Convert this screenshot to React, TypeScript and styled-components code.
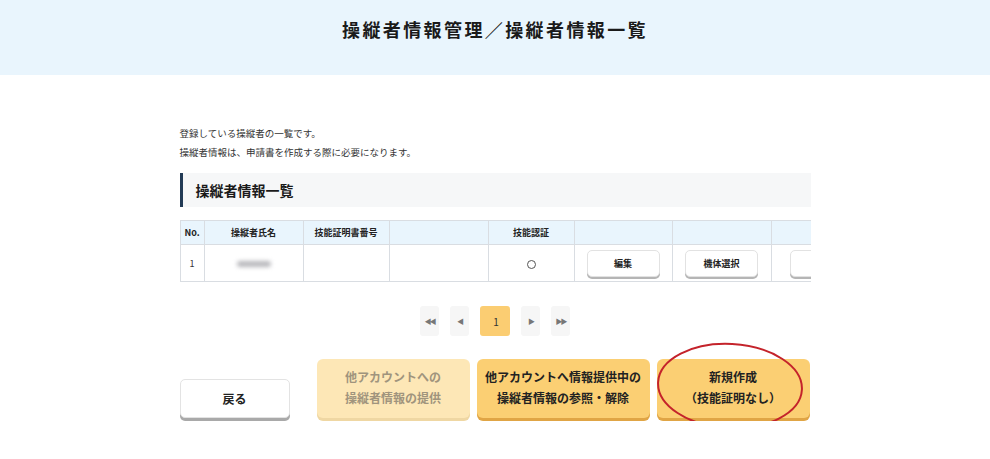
import React from "react";
import styled, { createGlobalStyle } from "styled-components";

const Global = createGlobalStyle`
  html, body { margin: 0; padding: 0; background: #fff; }
  body { font-family: "Noto Sans CJK JP", "Noto Sans", sans-serif; color: #222; }
  * { box-sizing: border-box; }
`;

const Header = styled.header`
  height: 75px;
  background: #e9f5fd;
  display: flex;
  justify-content: center;
  padding-top: 14px;
`;

const Title = styled.h1`
  margin: 0;
  font-size: 18px;
  font-weight: 700;
  letter-spacing: 2.4px;
  line-height: 30px;
  color: #1a1a1a;
`;

const Main = styled.main`
  width: 631px;
  margin: 0 auto;
  padding-top: 49px;
`;

const Intro = styled.p`
  margin: 0;
  font-size: 9.5px;
  line-height: 19px;
  color: #333;
`;

const SectionHead = styled.h2`
  margin: 11px 0 0;
  height: 34px;
  background: #f6f7f8;
  border-left: 3px solid #223a55;
  padding-left: 13px;
  display: flex;
  align-items: center;
  font-size: 14px;
  font-weight: 700;
  color: #1a1a1a;
`;

const TableWrap = styled.div`
  margin-top: 13px;
  overflow: hidden;
`;

const Table = styled.table`
  border-collapse: collapse;
  table-layout: fixed;
  width: 690px;
  font-size: 9px;
`;

const Th = styled.th<{ $w: number }>`
  width: ${(p) => p.$w}px;
  height: 24px;
  background: #e9f5fd;
  border: 1px solid #d9dde2;
  font-weight: 700;
  color: #222;
  padding: 0;
`;

const Td = styled.td<{ $align?: string }>`
  height: 37px;
  border: 1px solid #d9dde2;
  text-align: ${(p) => p.$align || "center"};
  padding: 0 0 0 ${(p) => (p.$align === "left" ? 18 : 0)}px;
  color: #333;
`;

const Circ = styled.span`
  display: inline-block;
  width: 9px;
  height: 9px;
  border: 1px solid #555;
  border-radius: 50%;
  vertical-align: middle;
`;

const Blur = styled.span`
  display: inline-block;
  width: 34px;
  height: 6px;
  border-radius: 4px;
  background: #b8b8bc;
  filter: blur(2px);
`;

const RowButton = styled.button`
  width: 73px;
  height: 27px;
  border: 1px solid #e2e2e2;
  border-radius: 5px;
  background: #fff;
  box-shadow: 0 2px 0 #b5b5b5;
  font-family: inherit;
  font-size: 9px;
  font-weight: 700;
  color: #222;
  padding: 0;
  vertical-align: middle;
`;

const Pager = styled.nav`
  margin-top: 24px;
  display: flex;
  justify-content: center;
  gap: 11px;
`;

const PageBtn = styled.span<{ $active?: boolean }>`
  width: ${(p) => (p.$active ? 30 : 19)}px;
  height: 30px;
  border-radius: 3px;
  background: ${(p) => (p.$active ? "#fbcd72" : "#f6f6f6")};
  display: flex;
  align-items: center;
  justify-content: center;
  font-size: ${(p) => (p.$active ? 10 : 7)}px;
  color: ${(p) => (p.$active ? "#333" : "#777")};
  letter-spacing: -2px;
`;

const Actions = styled.div`
  margin-top: 23px;
  display: flex;
  align-items: flex-end;
`;

const BackButton = styled.button`
  width: 110px;
  height: 39px;
  margin-right: 27px;
  margin-bottom: 3px;
  border: 1px solid #e3e3e3;
  border-radius: 5px;
  background: #fff;
  box-shadow: 0 3px 0 #a9a9a9;
  font-family: inherit;
  font-size: 12px;
  font-weight: 700;
  color: #222;
`;

const BigButton = styled.button<{ $w: number; $disabled?: boolean }>`
  position: relative;
  width: ${(p) => p.$w}px;
  height: 59px;
  margin: 0 7px 3px 0;
  border: none;
  border-radius: 6px;
  background: ${(p) => (p.$disabled ? "#fde7b6" : "#fbcf73")};
  box-shadow: 0 3px 0 ${(p) => (p.$disabled ? "#efd7a3" : "#e0a545")};
  font-family: inherit;
  font-size: 12px;
  font-weight: 700;
  line-height: 21px;
  color: ${(p) => (p.$disabled ? "#a0947d" : "#222")};
  padding: 0 0 4px;
  &:last-child { margin-right: 0; }
`;

const Circle = styled.svg`
  position: absolute;
  left: -2px;
  top: -17px;
  overflow: visible;
  pointer-events: none;
`;

const cols = [
  { w: 24, label: "No." },
  { w: 99, label: "操縦者氏名" },
  { w: 86, label: "技能証明書番号" },
  { w: 99, label: "" },
  { w: 86, label: "技能認証" },
  { w: 98, label: "" },
  { w: 99, label: "" },
  { w: 99, label: "" },
];

export default function App() {
  return (
    <>
      <Global />
      <Header>
        <Title>操縦者情報管理／操縦者情報一覧</Title>
      </Header>
      <Main>
        <Intro>登録している操縦者の一覧です。</Intro>
        <Intro>操縦者情報は、申請書を作成する際に必要になります。</Intro>
        <SectionHead>操縦者情報一覧</SectionHead>
        <TableWrap>
          <Table>
            <thead>
              <tr>
                {cols.map((c, i) => (
                  <Th key={i} $w={c.w}>
                    {c.label}
                  </Th>
                ))}
              </tr>
            </thead>
            <tbody>
              <tr>
                <Td>1</Td>
                <Td>
                  <Blur />
                </Td>
                <Td />
                <Td />
                <Td>
                  <Circ />
                </Td>
                <Td>
                  <RowButton>編集</RowButton>
                </Td>
                <Td>
                  <RowButton>機体選択</RowButton>
                </Td>
                <Td $align="left">
                  <RowButton aria-label="削除" />
                </Td>
              </tr>
            </tbody>
          </Table>
        </TableWrap>
        <Pager>
          <PageBtn>◀◀</PageBtn>
          <PageBtn>◀</PageBtn>
          <PageBtn $active>1</PageBtn>
          <PageBtn>▶</PageBtn>
          <PageBtn>▶▶</PageBtn>
        </Pager>
        <Actions>
          <BackButton>戻る</BackButton>
          <BigButton $w={153} $disabled>
            他アカウントへの
            <br />
            操縦者情報の提供
          </BigButton>
          <BigButton $w={173}>
            他アカウントへ情報提供中の
            <br />
            操縦者情報の参照・解除
          </BigButton>
          <BigButton $w={153}>
            新規作成
            <br />
            （技能証明なし）
            <Circle width="150" height="88" viewBox="0 0 150 88">
              <ellipse
                cx="75"
                cy="44"
                rx="72"
                ry="42"
                fill="none"
                stroke="#c4232b"
                strokeWidth="2"
                transform="rotate(3 75 44)"
              />
            </Circle>
          </BigButton>
        </Actions>
      </Main>
    </>
  );
}
